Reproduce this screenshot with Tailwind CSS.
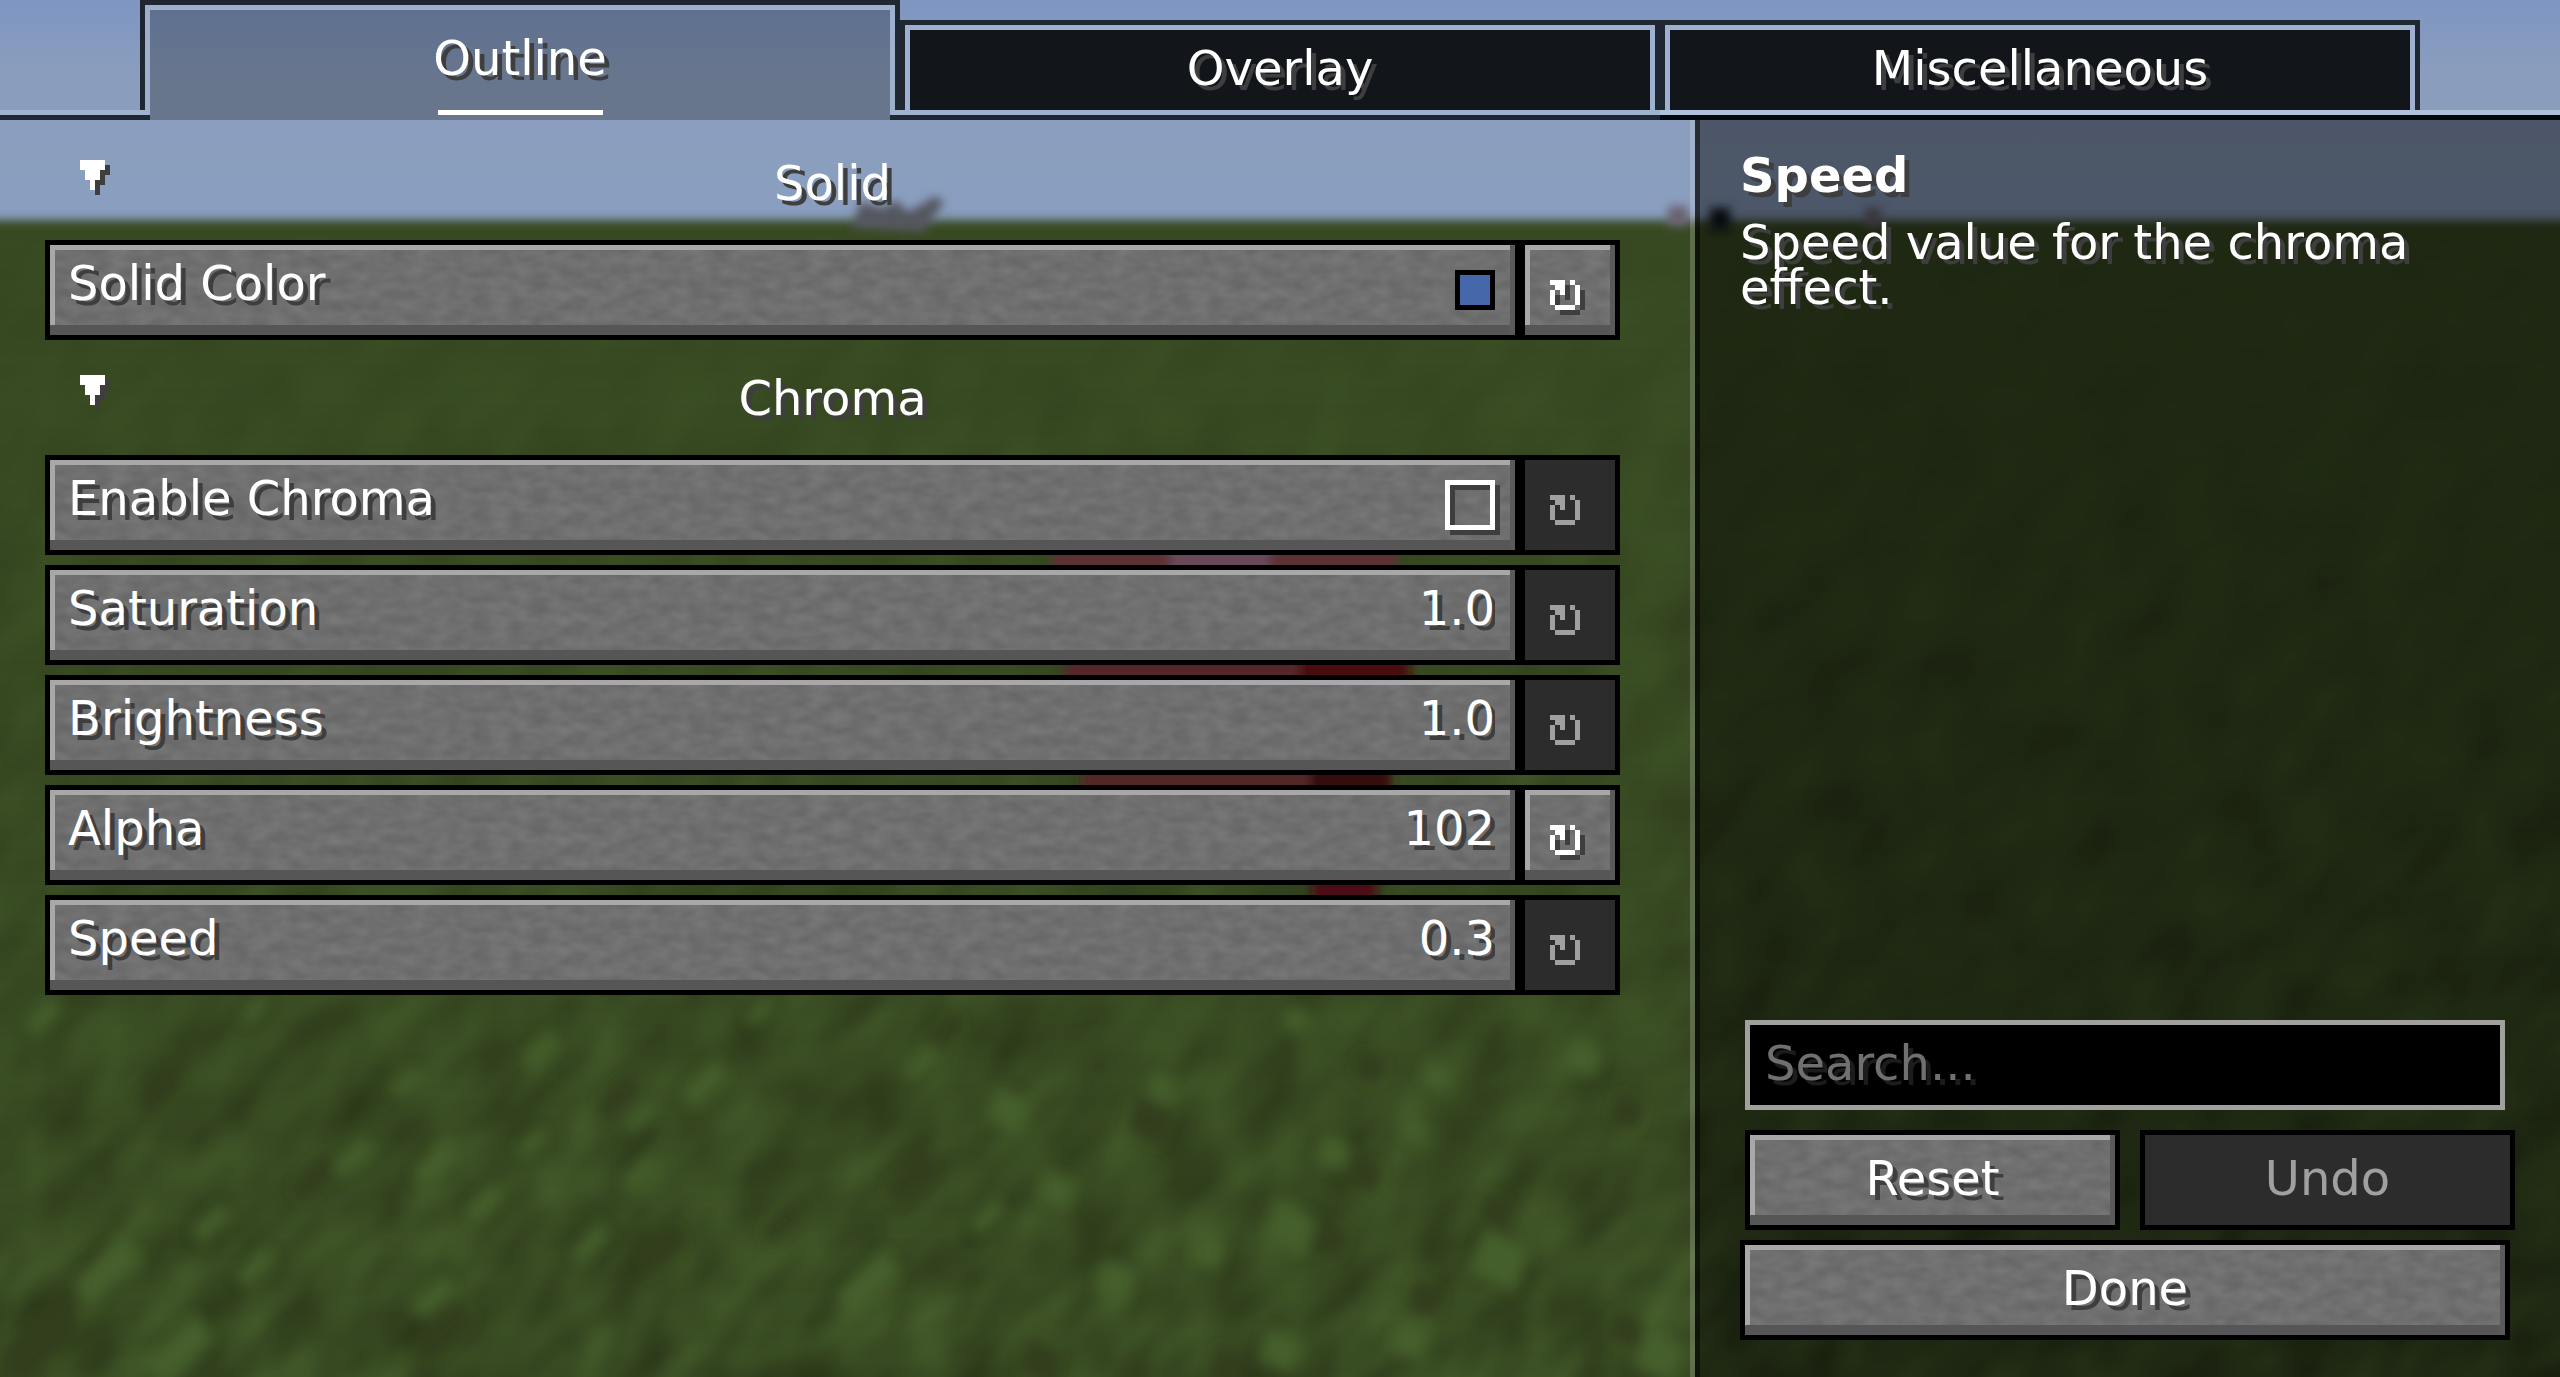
<!DOCTYPE html>
<html lang="en">
<head>
    <meta charset="UTF-8">
    <meta name="viewport" content="width=device-width, initial-scale=1.0">
    <title>Config</title>
    <script src="https://cdn.jsdelivr.net/npm/@tailwindcss/browser@4"></script>
    <style>
        body { font-family: "DejaVu Sans", sans-serif; }
        body, button:enabled, input { text-shadow: 5px 5px 0 #3e3e3e; }
        input[type="search"] { text-shadow: 5px 5px 0 #1c1c1c; }
        .stone {
            background-color: #6f6f6f;
            background-image: url("data:image/svg+xml,%3Csvg xmlns='http://www.w3.org/2000/svg' width='700' height='100'%3E%3Cfilter id='n' x='0' y='0' width='100%25' height='100%25' color-interpolation-filters='sRGB'%3E%3CfeTurbulence type='fractalNoise' baseFrequency='.05 .09' numOctaves='2' seed='4' stitchTiles='stitch'/%3E%3CfeColorMatrix values='.1 0 0 0 .386 .1 0 0 0 .386 .1 0 0 0 .386 0 0 0 0 1'/%3E%3C/filter%3E%3Crect width='700' height='100' filter='url(%23n)'/%3E%3C/svg%3E");
            border: 5px solid #000;
            box-shadow: inset -5px 0 0 #5a5a5a, inset 0 -10px 0 #565656, inset 5px 5px 0 #a8a8a8;
        }
        .stone-off {
            background: #2c2c2c;
            border: 5px solid #000;
        }
    </style>
</head>
<body class="min-h-screen bg-[#384a22] text-5xl text-white">

    <!-- World backdrop -->
    <svg class="fixed inset-0 -z-10 w-full h-full" viewBox="0 0 2560 1377" preserveAspectRatio="none" aria-hidden="true">
        <defs>
            <linearGradient id="sky" x1="0" y1="0" x2="0" y2="1">
                <stop offset="0" stop-color="#7e96c2"/>
                <stop offset=".3" stop-color="#8a9dbd"/>
                <stop offset="1" stop-color="#8a9fc0"/>
            </linearGradient>
            <linearGradient id="fade" x1="0" y1="0" x2="0" y2="1">
                <stop offset="0" stop-color="#fff" stop-opacity=".1"/>
                <stop offset=".5" stop-color="#fff" stop-opacity=".5"/>
                <stop offset="1" stop-color="#fff"/>
            </linearGradient>
            <mask id="depth"><rect y="215" width="2560" height="1162" fill="url(#fade)"/></mask>
            <filter id="grass" x="0" y="0" width="100%" height="100%" color-interpolation-filters="sRGB">
                <feTurbulence type="fractalNoise" baseFrequency=".018 .014" numOctaves="2" seed="7"/>
                <feColorMatrix values=".15 0 0 0 .145  .21 0 0 0 .185  .1 0 0 0 .083  0 0 0 0 1"/>
            </filter>
            <filter id="blur6" x="-20%" y="-20%" width="140%" height="140%"><feGaussianBlur stdDeviation="7"/></filter>
            <filter id="blur5" x="-20%" y="-50%" width="140%" height="200%"><feGaussianBlur stdDeviation="5"/></filter>
        </defs>
        <rect width="2560" height="240" fill="url(#sky)"/>
        <rect x="-40" y="220" width="2640" height="1260" fill="#384a22" filter="url(#blur5)"/>
        <rect y="238" width="2560" height="1139" fill="#384a22"/>
        <g mask="url(#depth)">
            <rect y="240" width="3400" height="1160" filter="url(#grass)" transform="skewX(-24)"/>
        </g>
        <g id="tufts" filter="url(#blur6)"></g>

        <!-- Distant shapes on the horizon -->
        <g filter="url(#blur5)">
            <path d="M852 228l8-26 24 6 12-8 12 12 28-16 8 6-20 30z" fill="#55565f"/>
            <path d="M1668 206h20v20h-20z" fill="#6b6270"/>
            <path d="M1710 208h20v22h-20z" fill="#10141a"/>
            <path d="M1865 208h16v18h-16z" fill="#6b6270"/>
        </g>
        <!-- Red figure behind the rows -->
        <g filter="url(#blur5)">
            <path d="M1052 540h345v50h-345z" fill="#5c3234"/>
            <path d="M1170 540h100v50h-100z" fill="#67495a"/>
            <path d="M1065 640h345v60h-345z" fill="#55282a"/>
            <path d="M1300 640h110v60h-110z" fill="#4a0d0b"/>
            <path d="M1082 755h310v50h-310z" fill="#552628"/>
            <path d="M1310 755h80v50h-80z" fill="#36090f"/>
            <path d="M1312 870h65v40h-65z" fill="#4b0a14"/>
        </g>
    </svg>

    <div class="min-h-screen flex flex-col">
        <!-- Tabs -->
        <nav class="h-[120px] grid grid-cols-[140px_1fr_1fr_1fr_140px] items-end">
            <div class="h-[10px] border-t-5 border-b-5 border-t-[#a0b2cc] border-b-[#1f2732]"></div>
            <div class="h-full flex flex-col">
                <button class="flex-1 border-x-5 border-t-5 border-[#1f2732] bg-black/25 shadow-[inset_5px_0_0_#9fb0cc,inset_-5px_0_0_#9fb0cc,inset_0_5px_0_#9fb0cc]">Outline</button>
                <div class="h-[10px] grid grid-cols-[10px_1fr_10px]">
                    <div class="border-t-5 border-b-5 border-t-[#a0b2cc] border-b-[#1f2732]"></div>
                    <div class="bg-black/25"><div class="mx-auto w-[165px] h-[5px] bg-white"></div></div>
                    <div class="border-t-5 border-b-5 border-t-[#a0b2cc] border-b-[#1f2732]"></div>
                </div>
            </div>
            <div class="h-[100px] flex flex-col">
                <button class="flex-1 border-x-5 border-t-5 border-[#1f2732] bg-[#12161b] shadow-[inset_5px_0_0_#9fb0d0,inset_-5px_0_0_#9fb0d0,inset_0_5px_0_#9fb0d0]">Overlay</button>
                <div class="h-[10px] border-t-5 border-b-5 border-t-[#a0b2cc] border-b-[#1f2732]"></div>
            </div>
            <div class="h-[100px] flex flex-col">
                <button class="flex-1 border-x-5 border-t-5 border-[#1f2732] bg-[#12161b] shadow-[inset_5px_0_0_#9fb0d0,inset_-5px_0_0_#9fb0d0,inset_0_5px_0_#9fb0d0]">Miscellaneous</button>
                <div class="h-[10px] border-t-5 border-b-5 border-t-[#b0c2da] border-b-[#04080f]"></div>
            </div>
            <div class="h-[10px] border-t-5 border-b-5 border-t-[#b0c2da] border-b-[#04080f]"></div>
        </nav>

        <div class="flex-1 grid grid-cols-[1fr_865px]">
            <!-- Options -->
            <main class="flex flex-col gap-[10px] pt-[15px] pl-[45px] pr-[70px] border-r-5 border-white/20">
                <button class="h-[95px] grid grid-cols-[60px_1fr_60px] items-center">
                    <svg class="w-[30px] h-[35px] ml-[35px] mb-[10px]" viewBox="0 0 6 7" shape-rendering="crispEdges"><path d="M1 1h5v2H5v2H4v2H3V5H2V3H1z" fill="#3e3e3e"/><path d="M0 0h5v2H4v2H3v2H2V4H1V2H0z" fill="#fff"/></svg>
                    <span>Solid</span>
                </button>

                <div class="flex h-[100px]">
                    <label class="stone flex-1 flex items-center justify-between pl-[18px] pr-[20px]">
                        <span class="pb-[15px]">Solid Color</span>
                        <input type="color" value="#4568ab" class="appearance-none size-10 border-5 border-black bg-[#4568ab] p-0 [&::-webkit-color-swatch-wrapper]:p-0 [&::-webkit-color-swatch]:border-0 [&::-webkit-color-swatch]:rounded-none">
                    </label>
                    <button class="stone w-[100px] grid place-items-center pt-[15px] pr-[5px]" aria-label="Reset Solid Color">
                        <svg class="w-[35px] h-[35px]" viewBox="0 0 7 7" shape-rendering="crispEdges"><use href="#reload" x="1" y="1" fill="#3e3e3e"/><use href="#reload" fill="#fff"/></svg>
                    </button>
                </div>

                <button class="h-[95px] grid grid-cols-[60px_1fr_60px] items-center">
                    <svg class="w-[30px] h-[35px] ml-[35px] mb-[10px]" viewBox="0 0 6 7" shape-rendering="crispEdges"><path d="M1 1h5v2H5v2H4v2H3V5H2V3H1z" fill="#3e3e3e"/><path d="M0 0h5v2H4v2H3v2H2V4H1V2H0z" fill="#fff"/></svg>
                    <span>Chroma</span>
                </button>

                <div class="flex h-[100px]">
                    <label class="stone flex-1 flex items-center justify-between pl-[18px] pr-[20px]">
                        <span class="pb-[15px]">Enable Chroma</span>
                        <input type="checkbox" class="appearance-none size-[50px] border-5 border-white shadow-[5px_5px_0_#3e3e3e,inset_5px_5px_0_#3e3e3e]">
                    </label>
                    <button disabled class="stone-off w-[100px] grid place-items-center pt-[15px] pr-[5px]" aria-label="Reset Enable Chroma">
                        <svg class="w-[35px] h-[35px]" viewBox="0 0 7 7" shape-rendering="crispEdges"><use href="#reload" fill="#a0a0a0"/></svg>
                    </button>
                </div>

                <div class="flex h-[100px]">
                    <label class="stone flex-1 flex items-center justify-between pl-[18px] pr-[20px] pb-[15px]">
                        <span>Saturation</span>
                        <input type="text" value="1.0" class="w-[240px] text-right slashed-zero">
                    </label>
                    <button disabled class="stone-off w-[100px] grid place-items-center pt-[15px] pr-[5px]" aria-label="Reset Saturation">
                        <svg class="w-[35px] h-[35px]" viewBox="0 0 7 7" shape-rendering="crispEdges"><use href="#reload" fill="#a0a0a0"/></svg>
                    </button>
                </div>

                <div class="flex h-[100px]">
                    <label class="stone flex-1 flex items-center justify-between pl-[18px] pr-[20px] pb-[15px]">
                        <span>Brightness</span>
                        <input type="text" value="1.0" class="w-[240px] text-right slashed-zero">
                    </label>
                    <button disabled class="stone-off w-[100px] grid place-items-center pt-[15px] pr-[5px]" aria-label="Reset Brightness">
                        <svg class="w-[35px] h-[35px]" viewBox="0 0 7 7" shape-rendering="crispEdges"><use href="#reload" fill="#a0a0a0"/></svg>
                    </button>
                </div>

                <div class="flex h-[100px]">
                    <label class="stone flex-1 flex items-center justify-between pl-[18px] pr-[20px] pb-[15px]">
                        <span>Alpha</span>
                        <input type="text" value="102" class="w-[240px] text-right slashed-zero">
                    </label>
                    <button class="stone w-[100px] grid place-items-center pt-[15px] pr-[5px]" aria-label="Reset Alpha">
                        <svg class="w-[35px] h-[35px]" viewBox="0 0 7 7" shape-rendering="crispEdges"><use href="#reload" x="1" y="1" fill="#3e3e3e"/><use href="#reload" fill="#fff"/></svg>
                    </button>
                </div>

                <div class="flex h-[100px]">
                    <label class="stone flex-1 flex items-center justify-between pl-[18px] pr-[20px] pb-[15px]">
                        <span>Speed</span>
                        <input type="text" value="0.3" class="w-[240px] text-right slashed-zero">
                    </label>
                    <button disabled class="stone-off w-[100px] grid place-items-center pt-[15px] pr-[5px]" aria-label="Reset Speed">
                        <svg class="w-[35px] h-[35px]" viewBox="0 0 7 7" shape-rendering="crispEdges"><use href="#reload" fill="#a0a0a0"/></svg>
                    </button>
                </div>
            </main>

            <!-- Description and actions -->
            <aside class="flex flex-col pl-[40px] pr-[50px] pt-[25px] pb-[37px] bg-black/45 border-l-5 border-black/50">
                <h2 class="font-bold leading-[60px]">Speed</h2>
                <p class="pt-[15px] leading-[45px]">Speed value for the chroma effect.</p>

                <input type="search" placeholder="Search..." aria-label="Search" class="mt-auto mx-[5px] h-[90px] px-[15px] pb-[5px] border-5 border-[#a0a19c] bg-black placeholder:text-[#707070] placeholder:opacity-100">
                <div class="mt-[20px] ml-[5px] -mr-[5px] grid grid-cols-2 gap-[20px]">
                    <button class="stone h-[100px] pb-[5px]">Reset</button>
                    <button disabled class="stone-off h-[100px] pb-[5px] text-[#a0a0a0]">Undo</button>
                </div>
                <button class="stone mt-[10px] h-[100px] pb-[5px]">Done</button>
            </aside>
        </div>
    </div>

    <!-- Shared reset glyph -->
    <svg class="hidden" aria-hidden="true">
        <path id="reload" d="M0 0h3v3H2V2H1V1H0zM4 0h1v1H4zM5 1h1v4H5zM0 2h1v3H0zM1 5h4v1H1z"/>
    </svg>

    <script>
        // x, y, size of each tuft of grass; light ones first, then the gaps between them
        const light = [[255,1010,14],[759,1012,14],[1296,1020,14],[407,1083,16],[542,1050,18],[640,1117,17],[352,1157,20],[640,1173,18],[531,1143,15],[211,1223,20],[483,1203,18],[591,1243,20],[255,1267,20],[434,1297,22],[922,1063,18],[1057,1190,18],[1009,1110,22],[987,1217,18],[1115,1280,20],[1209,1251,18],[1334,1153,18],[1437,1077,16],[1584,1058,20],[1410,1340,20],[1280,1350,22],[1180,1388,22],[868,1283,32],[108,1270,34],[1500,1260,30],[1085,1417,32],[43,1017,18],[434,1163,22],[705,1083,24],[1291,1227,26],[1160,1087,14],[1660,1355,26],[180,1350,34],[1415,1130,14],[1640,1450,30],[1450,1430,34],[1070,1430,30]];
        const dark = [[618,1097,22],[911,1177,26],[781,1223,20],[662,1250,24],[1370,1068,16],[1627,1330,20],[1230,1370,22],[445,1330,30],[1155,1434,22],[1365,1175,18],[315,1177,24],[944,1033,20],[160,1090,22],[1500,1395,26],[40,1340,40],[1150,1120,24],[1330,1240,18],[1425,1298,18],[1495,1210,16],[1628,1112,18],[1040,1360,22]];
        const tufts = document.getElementById('tufts');
        function draw(list, fill) {
            list.filter(([, y]) => y < 1377).forEach(([x, y, s]) => {
                const lean = x < 1000 ? s : -s;
                const p = document.createElementNS('http://www.w3.org/2000/svg', 'polygon');
                p.setAttribute('points', `${x - s},${y + s * 0.4} ${x + lean * 0.5},${y - s * 1.1} ${x + s},${y - s * 0.3} ${x - lean * 0.5},${y + s * 1.1}`);
                p.setAttribute('fill', fill);
                tufts.appendChild(p);
            });
        }
        draw(dark, '#303d1c');
        draw(light, '#455f2b');
    </script>
</body>
</html>
